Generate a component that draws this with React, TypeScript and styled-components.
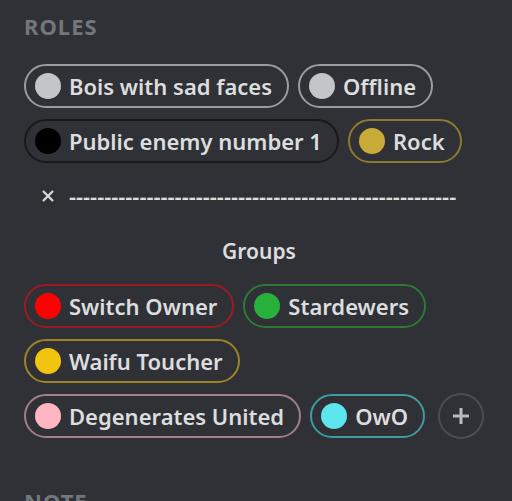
import React from "react";
import styled, { createGlobalStyle } from "styled-components";

const Global = createGlobalStyle`
  html, body { margin: 0; padding: 0; background: #2f3136; }
  body { width: 512px; height: 501px; overflow: hidden; }
`;

const Panel = styled.div`
  box-sizing: border-box;
  width: 512px;
  height: 501px;
  background: #2f3136;
  padding: 14px 18px 0 24px;
  font-family: "Noto Sans", "Open Sans", sans-serif;
  overflow: hidden;
`;

const Header = styled.h3`
  margin: 0;
  font-size: 22px;
  font-weight: 700;
  line-height: 24px;
  color: #72767d;
  text-transform: uppercase;
  letter-spacing: 1px;
`;

const RoleList = styled.div`
  display: flex;
  flex-wrap: wrap;
  gap: 11px 9px;
  margin-top: 26px;
`;

const Pill = styled.div<{ $border: string }>`
  box-sizing: border-box;
  height: 44px;
  display: flex;
  align-items: center;
  gap: 8px;
  padding: 0 15px 0 9px;
  border: 2px solid ${(p) => p.$border};
  border-radius: 22px;
  color: #dcddde;
  font-size: 22px;
  font-weight: 600;
  white-space: nowrap;
`;

const Dot = styled.span<{ $color: string }>`
  flex: none;
  width: 26px;
  height: 26px;
  border-radius: 50%;
  background: ${(p) => p.$color};
`;

const Remove = styled.span`
  flex: none;
  width: 26px;
  height: 26px;
  display: flex;
  align-items: center;
  justify-content: center;
  color: #dcddde;
`;

const Separator = styled.div`
  width: 100%;
  display: flex;
`;

const GroupLabel = styled.div`
  width: 100%;
  text-align: center;
  color: #dcddde;
  font-size: 21px;
  font-weight: 600;
  line-height: 44px;
`;

const AddButton = styled.button`
  box-sizing: border-box;
  width: 46px;
  height: 46px;
  margin-top: -1px;
  margin-left: 4px;
  border-radius: 50%;
  border: 2px solid #4a4d54;
  background: transparent;
  display: flex;
  align-items: center;
  justify-content: center;
  padding: 0;
  color: #b9bbbe;
`;

const NoteHeader = styled(Header)`
  margin-top: 50px;
`;

type Role = { name: string; color: string; border: string };

const roles: Role[] = [
  { name: "Bois with sad faces", color: "#c4c5c9", border: "#9a9ca1" },
  { name: "Offline", color: "#c4c5c9", border: "#9a9ca1" },
  { name: "Public enemy number 1", color: "#000000", border: "#18191b" },
  { name: "Rock", color: "#c9ab3a", border: "#8e7a2f" },
];

const groups: Role[] = [
  { name: "Switch Owner", color: "#ff0000", border: "#9e1a22" },
  { name: "Stardewers", color: "#27b03b", border: "#2c7a34" },
  { name: "Waifu Toucher", color: "#f1c40f", border: "#9d8424" },
  { name: "Degenerates United", color: "#ffb6c1", border: "#a37d87" },
  { name: "OwO", color: "#5ee6ef", border: "#3e9ba0" },
];

const RolePill = ({ role }: { role: Role }) => (
  <Pill $border={role.border}>
    <Dot $color={role.color} />
    {role.name}
  </Pill>
);

export default function App() {
  return (
    <>
      <Global />
      <Panel>
        <Header>Roles</Header>
        <RoleList>
          {roles.map((r) => (
            <RolePill key={r.name} role={r} />
          ))}
          <Separator>
            <Pill $border="transparent">
              <Remove>
                <svg width="12" height="12" viewBox="0 0 12 12">
                  <path d="M1 1L11 11M11 1L1 11" stroke="currentColor" strokeWidth="2.2" />
                </svg>
              </Remove>
              -------------------------------------------------------
            </Pill>
          </Separator>
          <GroupLabel>Groups</GroupLabel>
          {groups.map((r) => (
            <RolePill key={r.name} role={r} />
          ))}
          <AddButton aria-label="Add role">
            <svg width="18" height="18" viewBox="0 0 18 18">
              <path d="M9 1V17M1 9H17" stroke="currentColor" strokeWidth="3" />
            </svg>
          </AddButton>
        </RoleList>
        <NoteHeader>Note</NoteHeader>
      </Panel>
    </>
  );
}
